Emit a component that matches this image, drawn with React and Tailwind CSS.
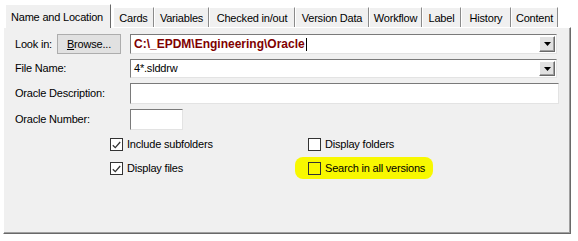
import React from "react";

const tabs = [
  { label: "Cards", w: 41 },
  { label: "Variables", w: 55 },
  { label: "Checked in/out", w: 86 },
  { label: "Version Data", w: 74 },
  { label: "Workflow", w: 53 },
  { label: "Label", w: 39 },
  { label: "History", w: 50 },
  { label: "Content", w: 47 },
];

function Arrow() {
  return (
    <div className="w-[16px] h-full bg-[#e1e1e1] border border-t-white border-l-white border-r-[#696969] border-b-[#696969] flex items-center justify-center shadow-[inset_-1px_-1px_0_#a0a0a0]">
      <svg width="7" height="4" viewBox="0 0 7 4">
        <path d="M0 0H7L3.5 4Z" fill="#000" />
      </svg>
    </div>
  );
}

function Sunken({ className = "", children }) {
  return (
    <div
      className={
        "bg-white border border-t-[#7a7a7a] border-l-[#7a7a7a] border-r-[#e3e3e3] border-b-[#e3e3e3] " +
        className
      }
    >
      {children}
    </div>
  );
}

function Check({ checked, label, highlight }) {
  return (
    <div className="relative flex items-center h-[13px]">
      {highlight && (
        <div className="absolute left-[-13px] top-[-5px] w-[138px] h-[22px] bg-[#f8f800] rounded-[8px] blur-[0.6px]" />
      )}
      <div
        className={
          "relative w-[13px] h-[13px] border border-[#333333] flex items-center justify-center " +
          (highlight ? "bg-[#f8f800]" : "bg-white")
        }
      >
        {checked && (
          <svg width="9" height="8" viewBox="0 0 9 8">
            <path d="M0.8 4.2L3.3 6.6L8.2 1" fill="none" stroke="#333" strokeWidth="1.3" />
          </svg>
        )}
      </div>
      <span className="relative ml-[4px] leading-none whitespace-nowrap">{label}</span>
    </div>
  );
}

export default function App() {
  return (
    <div className="w-[578px] h-[241px] bg-white text-[11px] text-black font-['Liberation_Sans',Arial,sans-serif] tracking-[-0.2px] overflow-hidden">
      <div className="pl-[3px] pt-[3px]">
        <div className="relative z-10 flex items-end h-[24px] pl-[2px]">
          <div className="w-[106px] h-[24px] bg-[#f0f0f0] border-t border-l border-white border-r border-r-[#696969] -mb-px flex items-start pl-[5px] pt-[4px] whitespace-nowrap">
            Name and Location
          </div>
          <div className="w-[2px]" />
          {tabs.map((t) => (
            <div
              key={t.label}
              style={{ width: t.w }}
              className="h-[20px] bg-[#f0f0f0] border-t border-l border-white border-r border-r-[#8a8a8a] flex items-center justify-center pt-[1px] whitespace-nowrap"
            >
              {t.label}
            </div>
          ))}
        </div>
        <div className="relative w-[568px] h-[207px] bg-[#f0f0f0] border-t border-l border-white border-r border-b border-r-[#696969] border-b-[#696969] shadow-[inset_-1px_-1px_0_#a0a0a0] pl-[11px] pt-[6px] flex flex-col">
          <div className="flex items-center h-[20px]">
            <span className="w-[42px] whitespace-nowrap">Look in:</span>
            <div className="w-[64px] h-[20px] bg-[#e1e1e1] border border-[#adadad] flex items-center justify-center">
              <span>
                <span className="underline">B</span>rowse...
              </span>
            </div>
            <Sunken className="ml-[9px] w-[427px] h-[20px] flex items-center justify-between p-[1px]">
              <span className="pl-[2px] text-[12px] font-bold text-[#800000] tracking-normal flex items-center">
                C:\_EPDM\Engineering\Oracle
                <span className="inline-block w-px h-[13px] bg-black ml-px" />
              </span>
              <Arrow />
            </Sunken>
          </div>
          <div className="flex items-center h-[19px] mt-[5px]">
            <span className="w-[115px]">File Name:</span>
            <Sunken className="w-[427px] h-[19px] flex items-center justify-between p-[1px]">
              <span className="pl-[2px]">4*.slddrw</span>
              <Arrow />
            </Sunken>
          </div>
          <div className="flex items-center h-[21px] mt-[5px]">
            <span className="w-[115px]">Oracle Description:</span>
            <Sunken className="w-[429px] h-[21px]" />
          </div>
          <div className="flex items-center h-[21px] mt-[5px]">
            <span className="w-[115px]">Oracle Number:</span>
            <Sunken className="w-[53px] h-[21px]" />
          </div>
          <div className="flex ml-[95px] mt-[8px]">
            <div className="flex flex-col gap-[11px] w-[198px]">
              <Check checked label="Include subfolders" />
              <Check checked label="Display files" />
            </div>
            <div className="flex flex-col gap-[11px]">
              <Check label="Display folders" />
              <Check label="Search in all versions" highlight />
            </div>
          </div>
        </div>
      </div>
    </div>
  );
}
